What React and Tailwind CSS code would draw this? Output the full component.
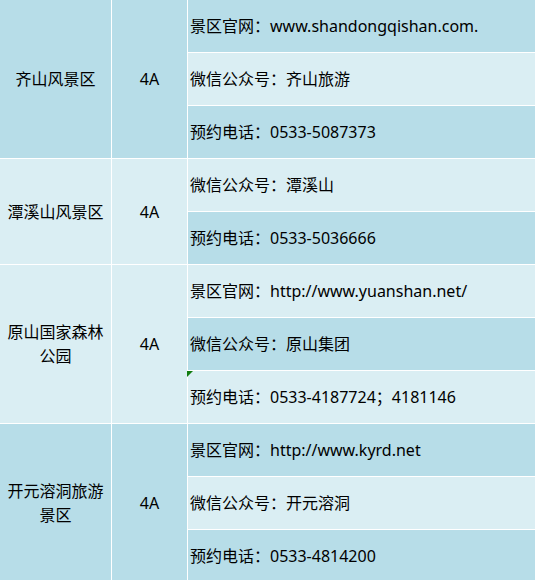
import React from 'react';

const spots = [
  {
    name: '齐山风景区',
    grade: '4A',
    dark: true,
    info: ['景区官网：www.shandongqishan.com.', '微信公众号：齐山旅游', '预约电话：0533-5087373'],
  },
  {
    name: '潭溪山风景区',
    grade: '4A',
    dark: false,
    info: ['微信公众号：潭溪山', '预约电话：0533-5036666'],
  },
  {
    name: '原山国家森林公园',
    grade: '4A',
    dark: false,
    info: ['景区官网：http://www.yuanshan.net/', '微信公众号：原山集团', '预约电话：0533-4187724；4181146'],
    flag: 2,
  },
  {
    name: '开元溶洞旅游景区',
    grade: '4A',
    dark: true,
    info: ['景区官网：http://www.kyrd.net', '微信公众号：开元溶洞', '预约电话：0533-4814200'],
  },
];

const DARK = 'bg-[#b7dde8]';
const LIGHT = 'bg-[#daeef3]';

const App = () => {
  let rowIndex = 0;

  return (
    <div className="w-[536px] h-[580px] overflow-hidden bg-white">
      <div className="grid grid-cols-[111px_75px_347px] auto-rows-[52px] gap-px bg-white pr-px w-[536px] font-['Noto_Sans','Noto_Sans_CJK_SC',sans-serif] text-[16px] text-black">
        {spots.map((spot) => {
          const span = spot.info.length === 3 ? 'row-span-3' : 'row-span-2';
          const bg = spot.dark ? DARK : LIGHT;
          return (
            <React.Fragment key={spot.name}>
              <div className={`${span} ${bg} flex items-center justify-center px-[6px] text-center leading-6`}>
                {spot.name}
              </div>
              <div className={`${span} ${bg} flex items-center justify-center`}>{spot.grade}</div>
              {spot.info.map((line, i) => {
                const rowBg = rowIndex % 2 === 0 ? DARK : LIGHT;
                rowIndex += 1;
                return (
                  <div key={line} className={`relative ${rowBg} flex items-center pl-[2px] whitespace-nowrap`}>
                    {spot.flag === i && (
                      // excel error marker
                      <span className="absolute -left-px top-0 w-0 h-0 border-t-[6px] border-r-[6px] border-t-[#107c10] border-r-transparent" />
                    )}
                    {line}
                  </div>
                );
              })}
            </React.Fragment>
          );
        })}
      </div>
    </div>
  );
};

export default App;
